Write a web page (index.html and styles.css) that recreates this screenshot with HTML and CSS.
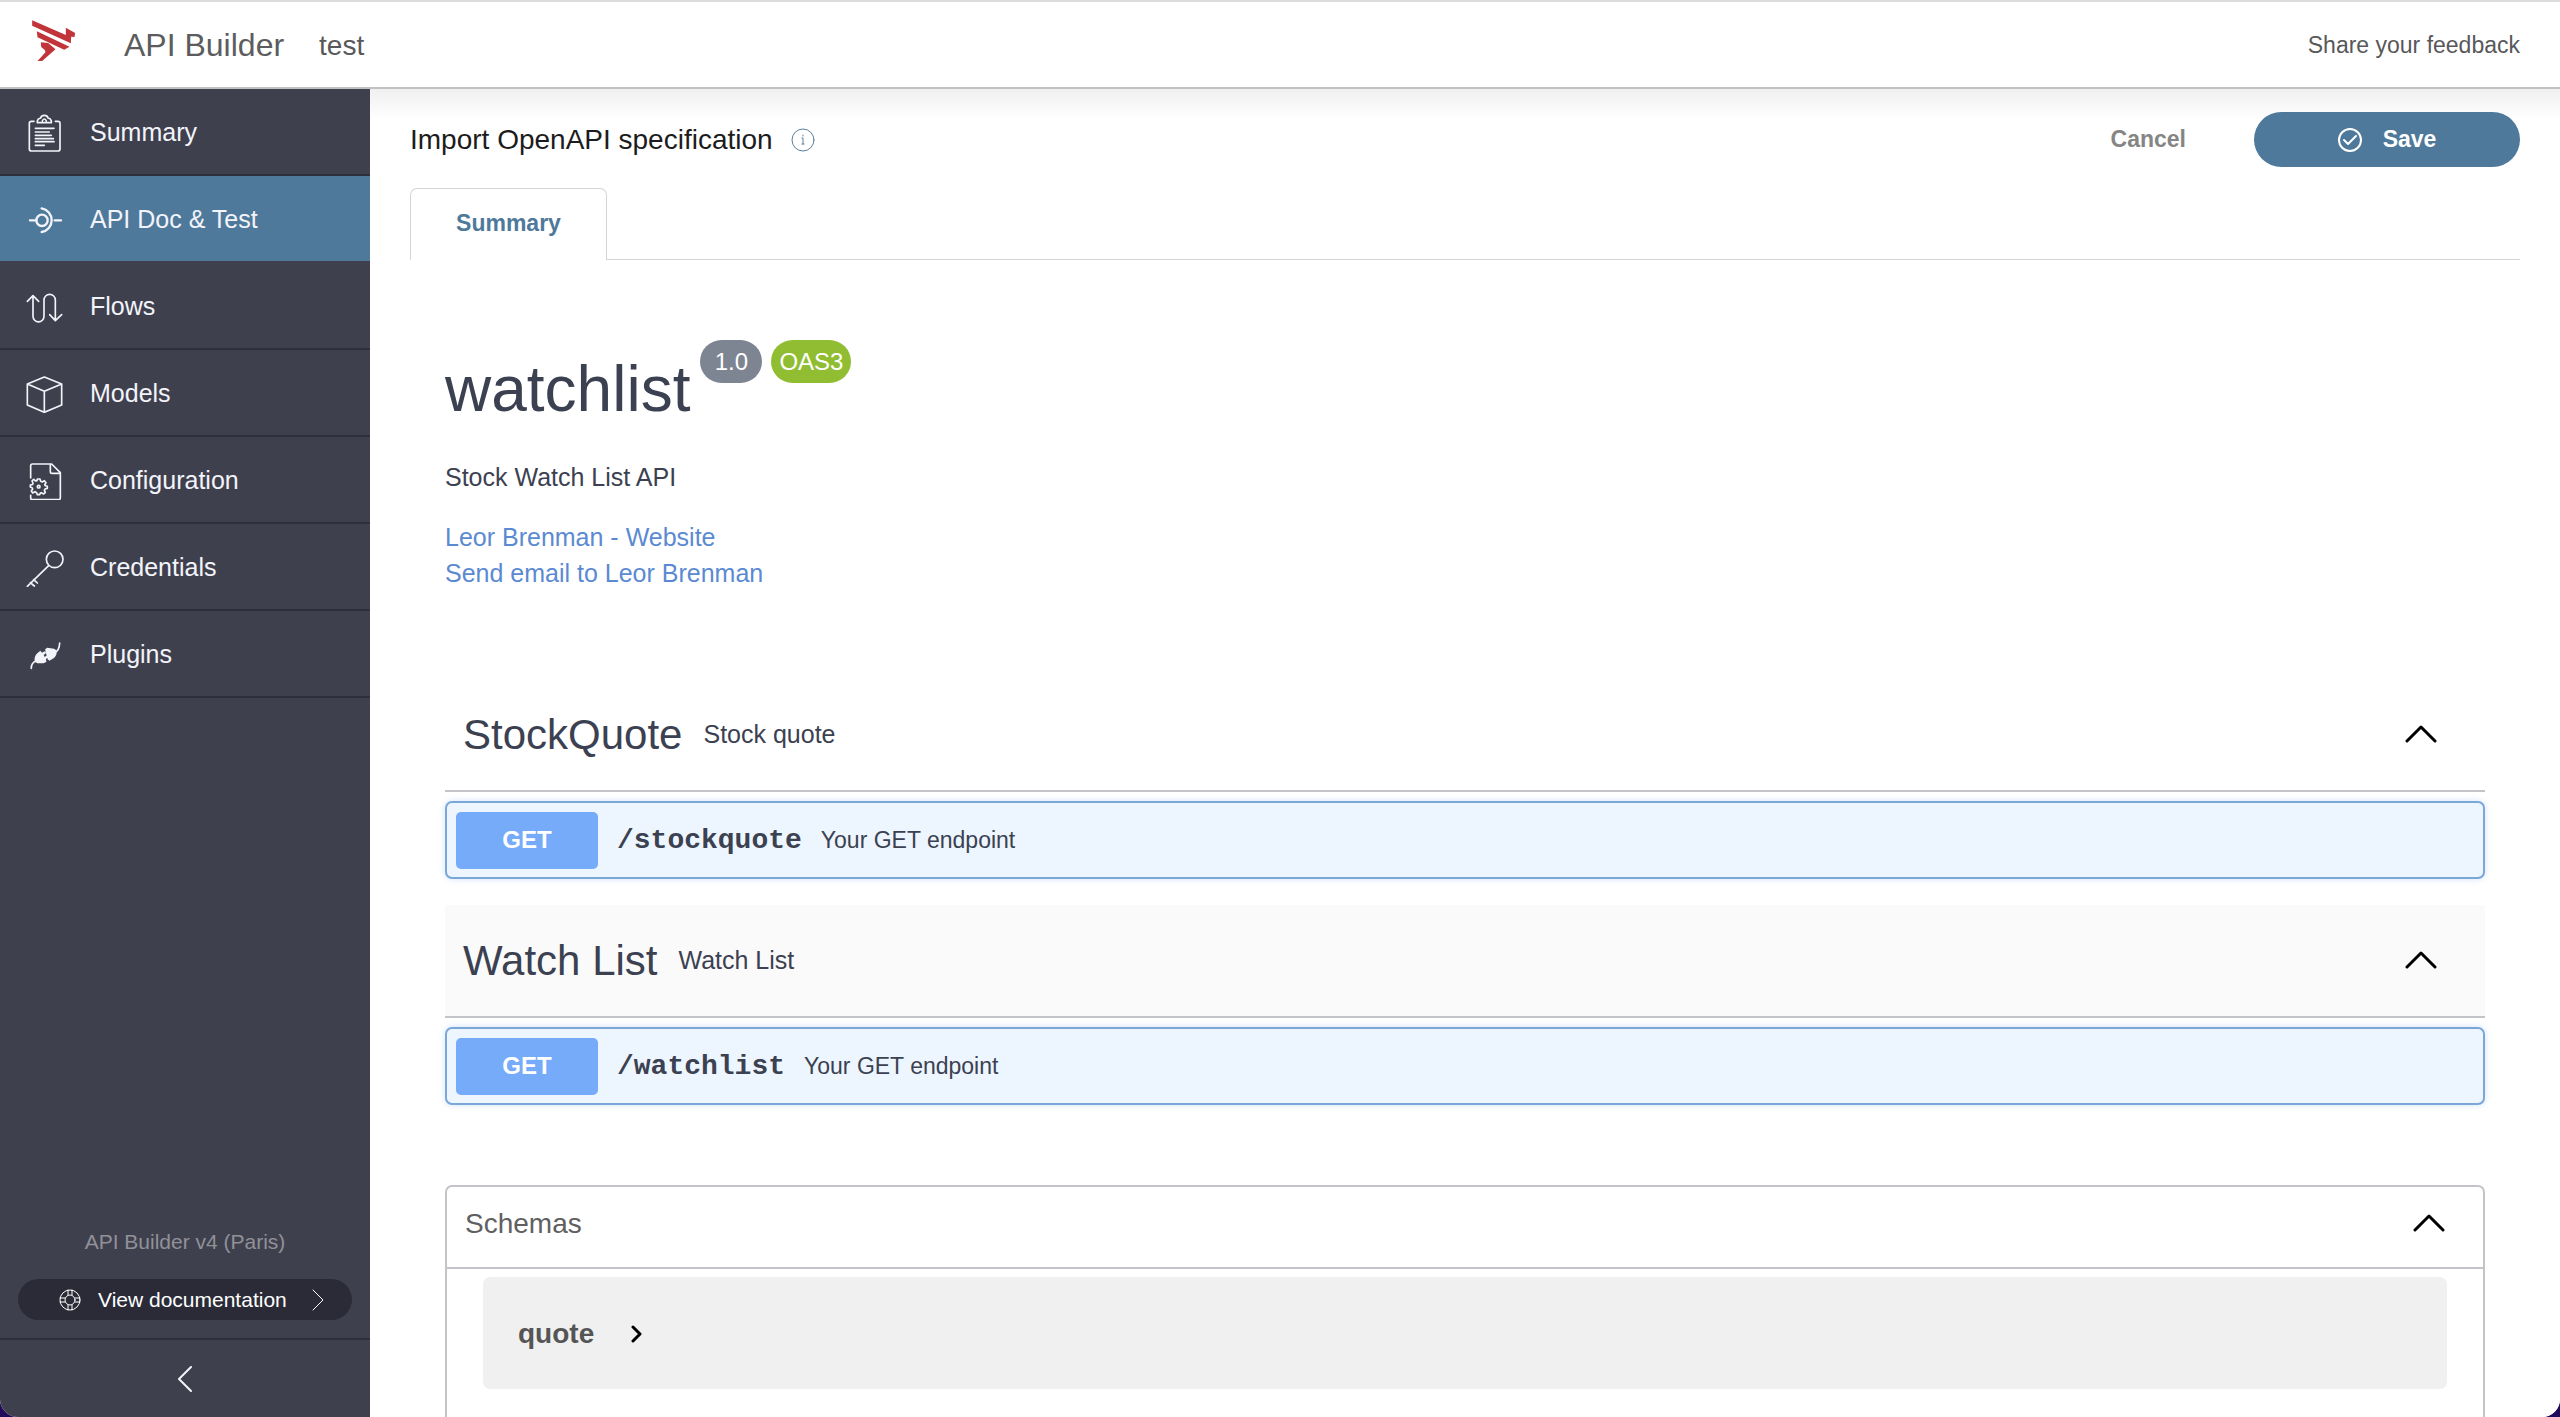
FILE: index.html
```html
<!DOCTYPE html>
<html lang="en">
<head>
<meta charset="utf-8">
<title>API Builder</title>
<link rel="stylesheet" href="styles.css">
</head>
<body>
<div class="app">
  <header class="topbar">
    <a class="logo" href="#" aria-label="Home"><svg viewBox="90 52 140 135"><path d="M96 59 197 103V81L225 97 223 109 213 108 212 128 96 75ZM110 92 208 138 192 147 112 110ZM122 125 144 127 166 146 126 181H112L136 155 134 148 123 139Z"/></svg></a>
    <h1 class="product">API Builder</h1>
    <span class="project">test</span>
    <a class="feedback" href="#">Share your feedback</a>
  </header>
  <div class="body">
    <aside class="sidebar">
      <nav class="nav">
        <a class="nav-item" href="#"><svg class="icon" viewBox="72 335 120 120"><path d="M102 363H94q-6 0-6 6V446q0 6 6 6H174q6 0 6-6V369q0-6-6-6H166M112 367V361q2-7 10-8 2-8 11-8t11 8q8 1 10 8V367ZM127 362q2-6 6-6t6 6M106 384H162M106 395H148M106 405H154M106 415H160M106 424H162M106 435H133"/></svg>Summary</a>
        <a class="nav-item nav-item-active" href="#"><svg class="icon icon-heavy" viewBox="72 596 120 120"><circle cx="126" cy="660" r="17"/><path d="M90 660H109M164 660H183M125 624A36 36 0 0 1 125 695"/></svg>API Doc &amp; Test</a>
        <a class="nav-item" href="#"><svg class="icon" viewBox="72 857 120 120"><path d="M82 903 99 886 116 903M99 887V948A16 16 0 0 0 132 948V899A17 17 0 0 1 166 899V960M149 943 166 961 185 943"/></svg>Flows</a>
        <a class="nav-item" href="#"><svg class="icon" viewBox="72 67 120 120"><path d="M133 79 185 100V163L133 185 82 163V100ZM82 100 133 122 185 100M133 122V185"/></svg>Models</a>
        <a class="nav-item" href="#"><svg class="icon" viewBox="72 328 120 120"><path d="M92 382V345q0-5 5-5H155L181 366V441q0 6-6 6H97q-5 0-5-5V434M151 341V363q0 5 5 5H181"/><circle cx="116" cy="408" r="4"/><path d="M112 385H120L122 392 127 394 133 390 138 396 134 402 136 405 142 407V413L135 415 133 419 136 425 131 430 124 426 121 427 119 432H112L110 426 105 423 98 427 94 421 98 415 96 411 91 409V403L98 401 99 397 96 391 101 386 107 391 111 390Z"/></svg>Configuration</a>
        <a class="nav-item" href="#"><svg class="icon" viewBox="72 590 120 120"><circle cx="164" cy="627" r="25"/><path d="M146 646 82 708M91 697 103 707M101 688 112 698"/></svg>Credentials</a>
        <a class="nav-item" href="#"><svg class="icon" viewBox="72 851 120 120"><path d="M94 954Q93 937 110 931M163 907Q178 902 179 878"/><path class="solid" d="M104 934Q102 917 112 909L121 901 126 907 134 903 138 908 131 914 134 920 141 915 145 920 138 926 139 935 130 939 112 939ZM136 896 142 892 162 895Q171 898 170 908 168 920 157 926L148 931 143 927 136 902Z"/></svg>Plugins</a>
      </nav>
      <div class="sidebar-foot">
        <p class="version">API Builder v4 (Paris)</p>
        <a class="docs" href="#"><svg class="docs-ring" viewBox="0 0 22 22"><circle cx="11" cy="11" r="10"/><circle cx="11" cy="11" r="5"/><path d="M9 1V6M13 1V6M9 16V21M13 16V21M1 9H6M1 13H6M16 9H21M16 13H21"/></svg>View documentation<svg class="docs-arrow" viewBox="0 0 12 22"><path d="M1 1 11 11 1 21"/></svg></a>
      </div>
      <button class="collapse" type="button" aria-label="Collapse menu"><svg viewBox="0 0 14 26"><path d="M13 1 1 13 13 25"/></svg></button>
    </aside>
    <main class="main">
      <div class="page-head">
        <h2 class="page-title">Import OpenAPI specification</h2>
        <button class="info" type="button" aria-label="Information"><svg viewBox="0 0 24 24"><circle cx="12" cy="12" r="11"/><path d="M11 10H12V16M11 16H13M12 7V8"/></svg></button>
        <button class="cancel" type="button">Cancel</button>
        <button class="save" type="button"><svg viewBox="0 0 24 24"><circle cx="12" cy="12" r="11"/><path d="M6 12 10 16 18 8"/></svg>Save</button>
      </div>
      <div class="tabs"><button class="tab" type="button">Summary</button></div>
      <div class="spec">
        <div class="spec-head">
          <h2 class="spec-title">watchlist</h2>
          <span class="badge">1.0</span>
          <span class="badge badge-oas">OAS3</span>
        </div>
        <p class="spec-text">Stock Watch List API</p>
        <div class="contact">
          <a href="#">Leor Brenman - Website</a>
          <a href="#">Send email to Leor Brenman</a>
        </div>
        <section class="tag">
          <div class="tag-head">
            <h3 class="tag-name">StockQuote</h3>
            <span class="tag-text">Stock quote</span>
            <button class="toggle" type="button" aria-label="Collapse StockQuote"><svg viewBox="0 0 32 18"><path d="M2 16 16 2 30 16"/></svg></button>
          </div>
          <div class="operation">
            <button class="method" type="button">GET</button>
            <code class="path">/stockquote</code>
            <span class="operation-text">Your GET endpoint</span>
          </div>
        </section>
        <section class="tag">
          <div class="tag-head tag-head-hover">
            <h3 class="tag-name">Watch List</h3>
            <span class="tag-text">Watch List</span>
            <button class="toggle" type="button" aria-label="Collapse Watch List"><svg viewBox="0 0 32 18"><path d="M2 16 16 2 30 16"/></svg></button>
          </div>
          <div class="operation">
            <button class="method" type="button">GET</button>
            <code class="path">/watchlist</code>
            <span class="operation-text">Your GET endpoint</span>
          </div>
        </section>
        <section class="schemas">
          <div class="schemas-head">
            <h3 class="schemas-title">Schemas</h3>
            <button class="toggle" type="button" aria-label="Collapse schemas"><svg viewBox="0 0 32 18"><path d="M2 16 16 2 30 16"/></svg></button>
          </div>
          <button class="model" type="button">quote<svg viewBox="0 0 12 18"><path d="M2 2 9 9 2 16"/></svg></button>
        </section>
      </div>
    </main>
  </div>
</div>
</body>
</html>
```
FILE: styles.css
```css
* { box-sizing: border-box; }

body {
  margin: 0;
  background: #210a5c;
  font-family: "Liberation Sans", Arial, sans-serif;
  font-size: 24px;
  color: #3b4151;
}

h1, h2, h3, p { margin: 0; font-weight: 400; }
a { color: inherit; text-decoration: none; }
button {
  margin: 0;
  padding: 0;
  border: 0;
  background: none;
  font: inherit;
  color: inherit;
}
svg {
  display: block;
  flex: none;
  fill: none;
  stroke: currentColor;
  stroke-linecap: round;
  stroke-linejoin: round;
}

.app {
  display: flex;
  flex-direction: column;
  height: 100vh;
  overflow: hidden;
  background: #fff;
  border-radius: 0 0 18px 18px;
}

.topbar {
  display: flex;
  flex: none;
  align-items: center;
  height: 89px;
  padding: 2px 40px 0 30px;
  border-top: 2px solid #dcdcdc;
  border-bottom: 2px solid #c1c1c3;
  color: #58585a;
}
.logo { margin: 0 47px 10px 0; }
.logo svg { width: 47px; height: 45px; fill: #c0343a; stroke: none; }
.product { font-size: 32px; color: #5c5c5e; }
.project { margin-left: 35px; font-size: 28px; }
.feedback { margin-left: auto; font-size: 23px; }

.body { display: flex; flex: 1; min-height: 0; }

.sidebar {
  display: flex;
  flex: none;
  flex-direction: column;
  width: 370px;
  background: #3f404e;
  color: #f2f4fa;
}
.nav-item {
  display: flex;
  align-items: center;
  gap: 26px;
  height: 87px;
  padding-left: 24px;
  border-bottom: 2px solid #2d2f3e;
  font-size: 25px;
  line-height: 30px;
}
.nav-item-active {
  border-color: #3f404e;
  background: #4e799b;
}
.icon { width: 40px; height: 40px; stroke-width: 5; }
.icon-heavy { stroke-width: 7; }
.solid { fill: currentColor; stroke: none; }

.sidebar-foot { margin-top: auto; padding: 0 18px 18px; }
.version {
  margin-bottom: 23px;
  font-size: 21px;
  line-height: 28px;
  text-align: center;
  color: #919198;
}
.docs {
  display: flex;
  align-items: center;
  height: 41px;
  padding-left: 41px;
  border-radius: 21px;
  background: #2a2b37;
  color: #fff;
  font-size: 21px;
}
.docs-ring { width: 22px; height: 22px; margin-right: 17px; }
.docs-arrow { width: 12px; height: 22px; margin-left: 25px; }
.collapse {
  display: flex;
  justify-content: center;
  align-items: center;
  height: 79px;
  border-top: 2px solid #2d2f3e;
}
.collapse svg { width: 14px; height: 26px; stroke-width: 2; }

.main {
  flex: 1;
  min-width: 0;
  overflow: hidden;
  padding: 23px 40px 0;
  background: linear-gradient(#f0f0f0, #fff 30px);
}
.page-head { display: flex; align-items: center; height: 55px; }
.page-title { font-size: 28px; color: #1c1c20; }
.info { margin-left: 18px; color: #5b7f9d; }
.info svg { width: 24px; height: 24px; }
.cancel {
  margin-left: auto;
  margin-right: 68px;
  font-size: 23px;
  font-weight: 700;
  color: #858585;
}
.save {
  display: flex;
  justify-content: center;
  align-items: center;
  gap: 21px;
  width: 266px;
  height: 55px;
  border-radius: 28px;
  background: #4e799b;
  color: #fff;
  font-size: 23px;
  font-weight: 700;
}
.save svg { width: 24px; height: 24px; stroke-width: 2; }

.tabs {
  display: flex;
  height: 72px;
  margin-top: 21px;
  border-bottom: 1px solid #d4d4d4;
}
.tab {
  width: 197px;
  height: 72px;
  padding-bottom: 2px;
  border: 1px solid #d4d4d4;
  border-bottom: 0;
  border-radius: 7px 7px 0 0;
  background: #fff;
  font-size: 23px;
  font-weight: 700;
  color: #4e799b;
}

.spec { padding: 80px 35px 0; }
.spec-head { display: flex; align-items: flex-start; }
.spec-title { margin: 11px 10px 0 0; font-size: 64px; line-height: 76px; }
.badge {
  min-width: 62px;
  height: 43px;
  margin-right: 9px;
  padding: 0 8px;
  border-radius: 22px;
  background: #7d8492;
  color: #fff;
  line-height: 43px;
  text-align: center;
}
.badge-oas { background: #90bd31; }
.spec-text { margin-top: 32px; font-size: 25px; line-height: 36px; }
.contact {
  display: flex;
  flex-direction: column;
  align-items: flex-start;
  margin: 24px 0 88px;
  font-size: 25px;
  line-height: 36px;
  color: #5b8ad2;
}

.tag { margin-bottom: 26px; }
.tag-head {
  display: flex;
  align-items: center;
  height: 113px;
  padding: 0 48px 0 18px;
  border-bottom: 2px solid #c3c4c8;
}
.tag-head-hover { background: #fafafa; }
.tag-name { font-size: 42px; }
.tag-text { margin-left: 21px; font-size: 25px; }
.toggle { margin-left: auto; padding-bottom: 2px; color: #000; }
.toggle svg { width: 32px; height: 18px; stroke-width: 3; }
.operation {
  display: flex;
  align-items: center;
  height: 78px;
  margin-top: 9px;
  padding: 0 9px;
  border: 2px solid #7ba6d8;
  border-radius: 7px;
  background: #edf5fe;
  box-shadow: 0 0 6px rgba(97, 160, 240, 0.3);
}
.method {
  width: 142px;
  height: 57px;
  border-radius: 5px;
  background: #75abf8;
  color: #fff;
  font-weight: 700;
}
.path {
  margin-left: 19px;
  font-family: "Liberation Mono", "Courier New", monospace;
  font-size: 28px;
  font-weight: 700;
}
.operation-text { margin-left: 19px; font-size: 23px; }

.schemas {
  height: 400px;
  margin-top: 80px;
  border: 2px solid #c3c4c8;
  border-radius: 7px;
}
.schemas-head {
  display: flex;
  align-items: center;
  height: 82px;
  padding: 0 38px 6px 18px;
  border-bottom: 2px solid #c3c4c8;
}
.schemas-title { font-size: 28px; color: #606060; }
.model {
  display: flex;
  align-items: center;
  gap: 37px;
  width: calc(100% - 72px);
  height: 112px;
  margin: 8px 36px;
  padding: 2px 0 0 35px;
  border-radius: 7px;
  background: #f0f0f0;
  color: #555;
  font-size: 28px;
  font-weight: 700;
}
.model svg { width: 12px; height: 18px; stroke: #000; stroke-width: 3; }
```
